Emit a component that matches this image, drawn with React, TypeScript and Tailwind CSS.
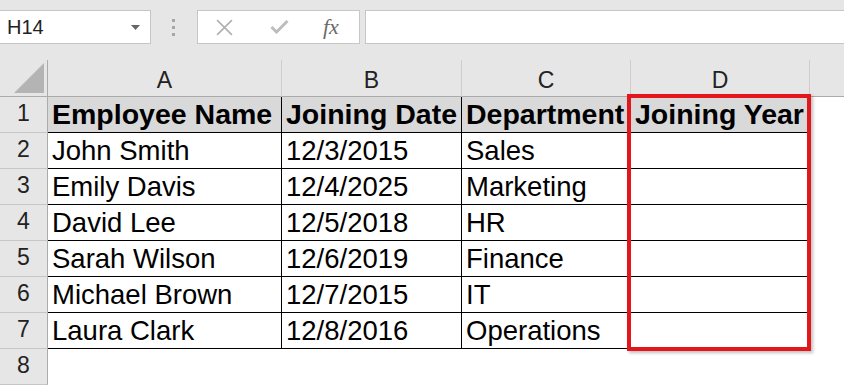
import React from "react";

const rows = [
  ["Employee Name", "Joining Date", "Department", "Joining Year"],
  ["John Smith", "12/3/2015", "Sales", ""],
  ["Emily Davis", "12/4/2025", "Marketing", ""],
  ["David Lee", "12/5/2018", "HR", ""],
  ["Sarah Wilson", "12/6/2019", "Finance", ""],
  ["Michael Brown", "12/7/2015", "IT", ""],
  ["Laura Clark", "12/8/2016", "Operations", ""],
];

const cols = ["A", "B", "C", "D"];

export default function App() {
  return (
    <div className="w-[844px] h-[386px] overflow-hidden bg-white font-['Liberation_Sans',Arial,sans-serif] text-black relative">
      {/* Formula bar */}
      <div className="h-[60px] bg-[#e6e6e6] flex items-start pt-[10px]">
        <div className="w-[151px] h-[34px] bg-white border border-[#c6c6c6] border-l-0 flex items-center justify-between pl-[7px] pr-[10px]">
          <span className="text-[20px] text-[#222]">H14</span>
          <svg width="9" height="5" viewBox="0 0 9 5">
            <path d="M0 0h9L4.5 5z" fill="#666" />
          </svg>
        </div>
        <div className="w-[44px] h-[34px] flex flex-col items-center justify-center gap-[4px]">
          <span className="w-[3px] h-[3px] bg-[#a6a6a6]" />
          <span className="w-[3px] h-[3px] bg-[#a6a6a6]" />
          <span className="w-[3px] h-[3px] bg-[#a6a6a6]" />
        </div>
        <div className="ml-[2px] w-[163px] h-[34px] bg-white border border-[#c6c6c6] flex items-center">
          <svg className="ml-[18px]" width="17" height="17" viewBox="0 0 16 16">
            <path d="M1 1l14 14M15 1L1 15" stroke="#b0b0b0" strokeWidth="1.5" />
          </svg>
          <svg className="ml-[37px]" width="19" height="14" viewBox="0 0 18 14">
            <path d="M1 7l5 5L17 1" stroke="#bdbdbd" strokeWidth="3" fill="none" />
          </svg>
          <span className="ml-[34px] text-[22px] leading-none italic text-[#6a6a6a] font-['Liberation_Serif',serif]">
            fx
          </span>
        </div>
        <div className="ml-[5px] flex-1 h-[34px] bg-white border border-[#c6c6c6] border-r-0" />
      </div>

      {/* Grid */}
      <div className="grid grid-cols-[48px_234px_180px_169px_179px_1fr] grid-rows-[37px_repeat(8,36px)]">
        {/* Column headers */}
        <div className="bg-[#e6e6e6] border-r border-b border-[#ababab] flex items-end justify-end pr-[3px] pb-[3px]">
          <svg width="30" height="30" viewBox="0 0 30 30">
            <path d="M30 0V30H0z" fill="#b4b4b4" />
          </svg>
        </div>
        {cols.map((c) => (
          <div
            key={c}
            className="bg-[#e6e6e6] border-r border-r-[#cdcdcd] border-b border-b-[#ababab] flex items-center justify-center pt-[4px] text-[23px] text-[#222]"
          >
            {c}
          </div>
        ))}
        <div className="bg-[#e6e6e6] border-b border-[#ababab]" />

        {/* Rows */}
        {rows.map((r, i) => (
          <React.Fragment key={i}>
            <div className="bg-[#e6e6e6] border-r border-r-[#ababab] border-b border-b-[#c6c6c6] flex items-end justify-center pb-[4px] text-[23px] leading-[29px] text-[#222]">
              {i + 1}
            </div>
            {r.map((v, j) => (
              <div
                key={j}
                className={`border-r border-b border-black flex items-end pb-[3px] pl-[4px] leading-[29px] whitespace-nowrap ${
                  i === 0 ? "bg-[#d9d9d9] font-bold text-[28.5px]" : "bg-white text-[27.5px]"
                }`}
              >
                {v}
              </div>
            ))}
            <div className="bg-white" />
          </React.Fragment>
        ))}

        {/* Row 8 */}
        <div className="bg-[#e6e6e6] border-r border-r-[#ababab] border-b border-b-[#c6c6c6] flex items-end justify-center pb-[4px] text-[23px] leading-[29px] text-[#222]">
          8
        </div>
        <div className="col-span-5 bg-white" />
      </div>

      {/* Highlight box around column D */}
      <div className="absolute left-[627px] top-[94px] w-[184px] h-[257px] border-[4px] border-[#e3161b] shadow-[2px_2px_3px_rgba(0,0,0,0.25)]" />
    </div>
  );
}
